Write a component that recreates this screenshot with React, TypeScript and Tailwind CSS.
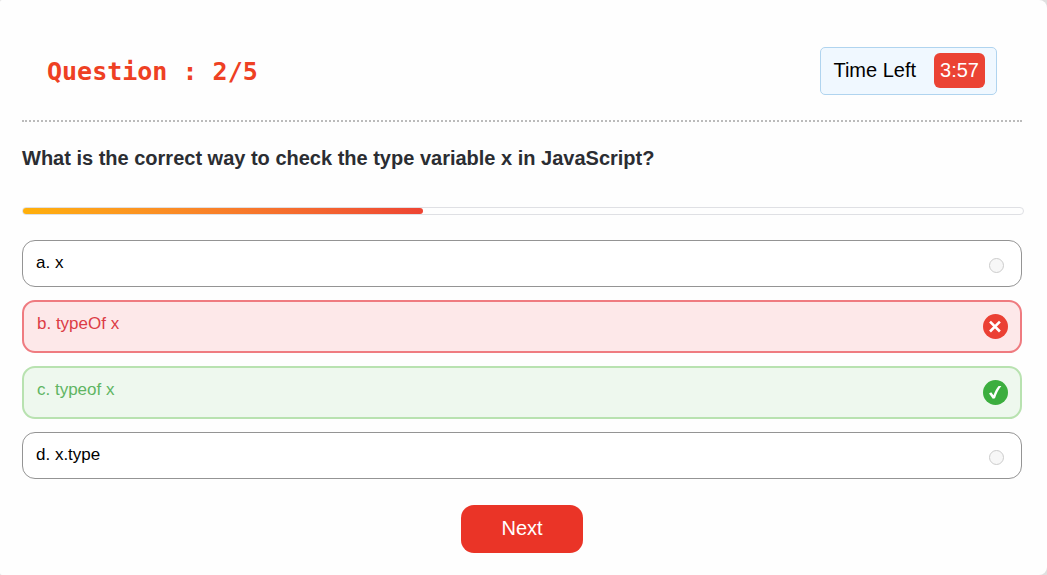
type Status = "plain" | "wrong" | "correct";

const options: { id: string; text: string; status: Status }[] = [
  { id: "a", text: "a. x", status: "plain" },
  { id: "b", text: "b. typeOf x", status: "wrong" },
  { id: "c", text: "c. typeof x", status: "correct" },
  { id: "d", text: "d. x.type", status: "plain" },
];

const rowStyles: Record<Status, string> = {
  plain: "h-[47px] border border-[#949494] bg-white text-black",
  wrong: "h-[53px] border-2 border-[#ef7b80] bg-[#fde8e9] text-[#dc3c46]",
  correct: "h-[53px] border-2 border-[#b8e2b0] bg-[#eef8ee] text-[#5fb563]",
};

function WrongIcon() {
  return (
    <svg viewBox="0 0 25 25" className="size-[25px]" aria-hidden="true">
      <circle cx="12.5" cy="12.5" r="12.5" fill="#eb4034" />
      <path d="M7 7.6 16.9 17.5M16.9 7.6 7 17.5" stroke="#fff" strokeWidth="2.6" />
    </svg>
  );
}

function CorrectIcon() {
  return (
    <svg viewBox="0 0 25 25" className="size-[25px]" aria-hidden="true">
      <circle cx="12.5" cy="12.5" r="12.5" fill="#3cae3f" />
      <path d="M6 13.6 8.2 12.3 10.5 15.3C11.8 11.6 13.4 8.7 15.6 6L18.4 6C15.4 9.8 13.4 13.6 12 18.2L9.8 18.8Z" fill="#fff" />
    </svg>
  );
}

function Option({ id, text, status }: { id: string; text: string; status: Status }) {
  return (
    <label
      htmlFor={`option-${id}`}
      className={`flex justify-between rounded-[13px] pr-3 pl-[13px] ${rowStyles[status]}`}
    >
      <span className="py-3 text-[17px] leading-5">{text}</span>
      {status === "plain" ? (
        <input
          id={`option-${id}`}
          type="radio"
          name="answer"
          className="mt-[3px] mr-[5px] size-[15px] appearance-none self-center rounded-full border border-[#cccccc] bg-[#f7f7f7]"
        />
      ) : (
        <span className="relative flex items-center">
          <input
            id={`option-${id}`}
            type="radio"
            name="answer"
            defaultChecked={status === "wrong"}
            className="sr-only"
          />
          {status === "wrong" ? <WrongIcon /> : <CorrectIcon />}
        </span>
      )}
    </label>
  );
}

export default function App() {
  const current = 2;
  const total = 5;
  return (
    <div className="min-h-screen bg-[#e0e0e0] font-['Liberation_Sans',Arial,sans-serif]">
      <main className="min-h-screen rounded-l-[2px] rounded-r-lg bg-[#fefefe] pt-[47px] pr-[25px] pb-[22px] pl-[22px]">
        <header className="flex items-center justify-between border-b-2 border-dotted border-[#bbbbbb] px-[25px] pb-[25px]">
          <h1 className="pt-[2px] font-['DejaVu_Sans_Mono',monospace] text-[25px] leading-8 font-bold text-[#ee4023]">
            Question : {current}/{total}
          </h1>
          <div className="flex h-12 items-center gap-[18px] rounded-[5px] border border-[#b0d4ef] bg-[#f0f8ff] pr-[11px] pb-[2px] pl-3 text-xl text-black">
            <span>Time Left</span>
            <span className="rounded-md bg-[#eb4334] px-[6px] py-1 leading-[27px] text-white">3:57</span>
          </div>
        </header>

        <h2 className="mt-[22px] text-xl font-bold text-[#2b2d32]">
          What is the correct way to check the type variable x in JavaScript?
        </h2>

        <div className="mt-[35px] -mr-[2px] h-2 rounded-full border border-[#dfe0e4]">
          <div
            className="h-full rounded-full bg-linear-to-r from-[#ffb009] to-[#ee4433]"
            style={{ width: `${(current / total) * 100}%` }}
          />
        </div>

        <div className="mt-[25px] flex flex-col gap-[13px]">
          {options.map((o) => (
            <Option key={o.id} {...o} />
          ))}
        </div>

        <div className="mt-[26px] flex justify-center">
          <button type="button" className="h-12 rounded-[13px] bg-[#ea3427] px-10 pb-[2px] text-xl text-white">
            Next
          </button>
        </div>
      </main>
    </div>
  );
}
